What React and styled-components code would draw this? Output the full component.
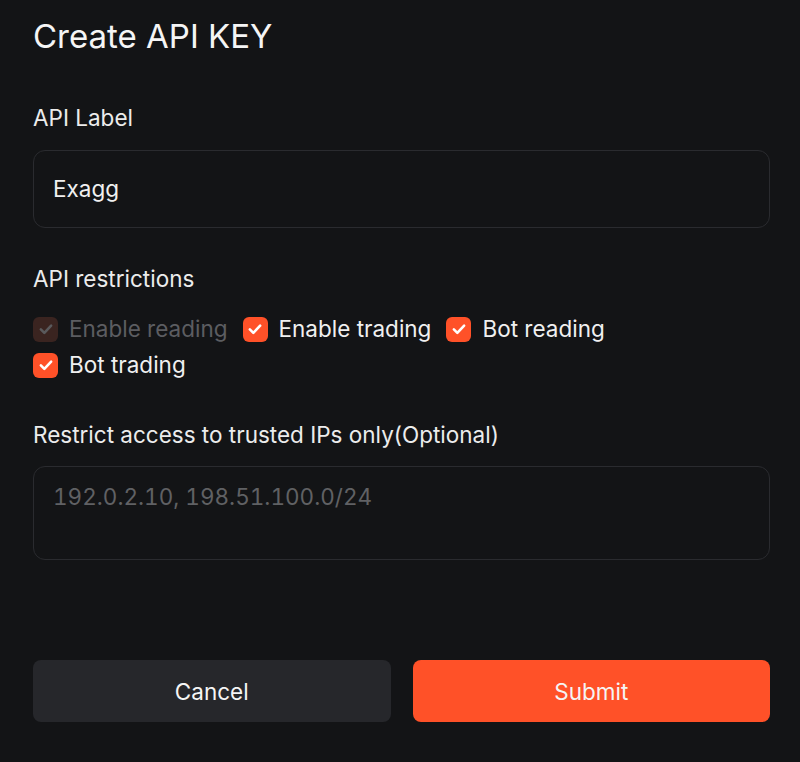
import React from "react";
import styled, { createGlobalStyle } from "styled-components";

const Global = createGlobalStyle`
  html, body { margin: 0; padding: 0; background: #131416; }
  body { font-family: Inter, "Noto Sans", sans-serif; color: #f2f2f2; }
  * { box-sizing: border-box; }
`;

const Page = styled.div`
  width: 800px;
  height: 762px;
  padding: 14px 30px 0 33px;
  display: flex;
  flex-direction: column;
`;

const Title = styled.h1`
  margin: 0;
  font-size: 33px;
  font-weight: 400;
  line-height: 44px;
  color: #f5f5f5;
`;

const Label = styled.div`
  font-size: 22.5px;
  line-height: 30px;
  color: #ececec;
  margin-top: ${(p) => p.$mt}px;
`;

const Field = styled.div`
  margin-top: ${(p) => p.$mt}px;
  height: ${(p) => p.$h}px;
  border: 1.5px solid #2a2b2f;
  border-radius: 12px;
  padding: ${(p) => (p.$top ? "15px 19px" : "0 19px")};
  display: flex;
  align-items: ${(p) => (p.$top ? "flex-start" : "center")};
  font-size: 22.5px;
  font-variant-numeric: tabular-nums;
  line-height: 30px;
  color: ${(p) => (p.$placeholder ? "#606164" : "#f0f0f0")};
`;

const Checks = styled.div`
  margin-top: 22px;
  display: flex;
  flex-wrap: wrap;
  column-gap: 15px;
  row-gap: 10px;
  width: 700px;
`;

const CheckItem = styled.label`
  display: flex;
  align-items: center;
  gap: 11px;
  font-size: 22.5px;
  line-height: 26px;
  color: ${(p) => (p.$disabled ? "#5c5d61" : "#f0f0f0")};
`;

const Box = styled.span`
  width: 25px;
  height: 25px;
  border-radius: 6px;
  background: ${(p) => (p.$disabled ? "#3a2420" : "#ff5128")};
  display: flex;
  align-items: center;
  justify-content: center;
`;

const Buttons = styled.div`
  margin-top: auto;
  margin-bottom: 40px;
  display: grid;
  grid-template-columns: 1fr 1fr;
  gap: 22px;
`;

const Button = styled.button`
  height: 62px;
  border: none;
  border-radius: 8px;
  font-family: inherit;
  font-size: 22.5px;
  color: #f5f5f5;
  background: ${(p) => (p.$primary ? "#ff5128" : "#26272b")};
`;

function Check({ label, disabled }) {
  return (
    <CheckItem $disabled={disabled}>
      <Box $disabled={disabled}>
        <svg width="18" height="18" viewBox="0 0 14 14" fill="none">
          <path
            d="M3 7.3l2.7 2.7 5.3-5.6"
            stroke={disabled ? "#5a5a5c" : "#ffffff"}
            strokeWidth="2"
            strokeLinecap="round"
            strokeLinejoin="round"
          />
        </svg>
      </Box>
      {label}
    </CheckItem>
  );
}

export default function App() {
  return (
    <>
      <Global />
      <Page>
        <Title>Create API KEY</Title>
        <Label $mt={45}>API Label</Label>
        <Field $mt={17} $h={78}>Exagg</Field>
        <Label $mt={36}>API restrictions</Label>
        <Checks>
          <Check label="Enable reading" disabled />
          <Check label="Enable trading" />
          <Check label="Bot reading" />
          <Check label="Bot trading" />
        </Checks>
        <Label $mt={42}>Restrict access to trusted IPs only(Optional)</Label>
        <Field $mt={16} $h={94} $top $placeholder>
          192.0.2.10, 198.51.100.0/24
        </Field>
        <Buttons>
          <Button>Cancel</Button>
          <Button $primary>Submit</Button>
        </Buttons>
      </Page>
    </>
  );
}
